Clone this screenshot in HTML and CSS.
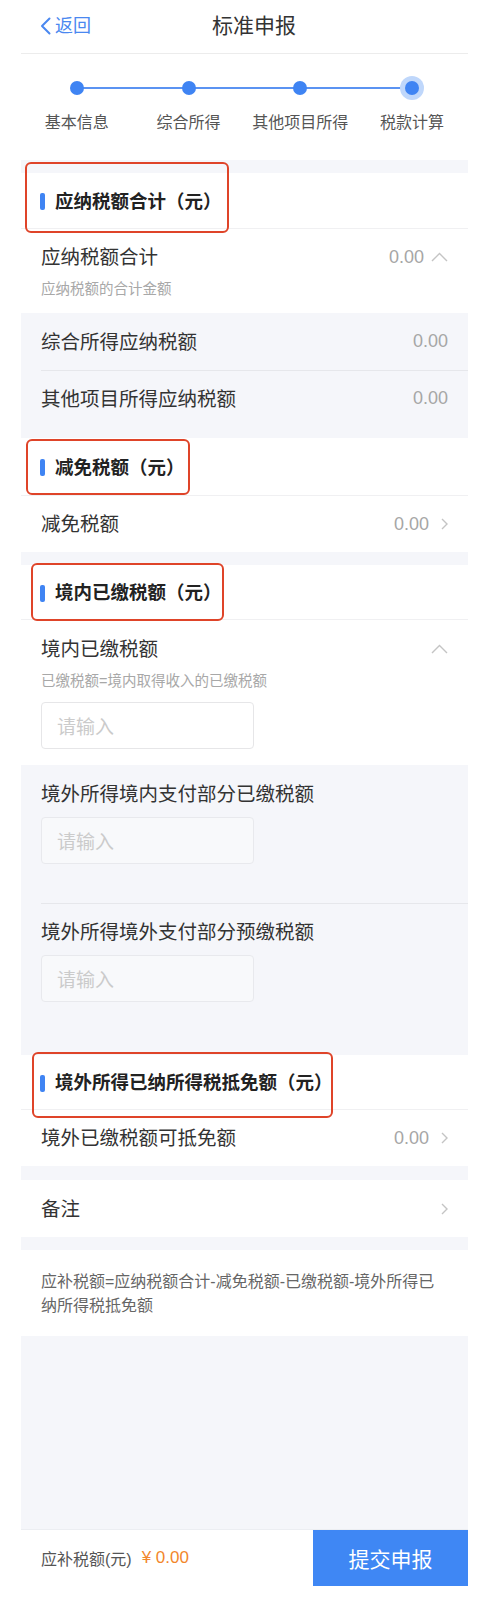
FILE: index.html
```html
<!DOCTYPE html>
<html lang="zh-CN">
<head>
<meta charset="utf-8">
<title>标准申报</title>
<link rel="stylesheet" href="styles.css">
</head>
<body>
<div class="page">
  <header class="nav">
    <a class="back">
      <svg class="back-icon" width="11" height="18" viewBox="0 0 11 18"><polyline points="9.5,1.5 2,9 9.5,16.5" fill="none" stroke="#4a88f0" stroke-width="2" stroke-linecap="round" stroke-linejoin="round"/></svg>
      <span>返回</span>
    </a>
    <h1 class="title">标准申报</h1>
    <span></span>
  </header>

  <div class="steps">
    <div class="step"><span class="dot"></span><span class="step-label">基本信息</span></div>
    <div class="step"><span class="dot"></span><span class="step-label">综合所得</span></div>
    <div class="step"><span class="dot"></span><span class="step-label">其他项目所得</span></div>
    <div class="step current"><span class="dot"></span><span class="step-label">税款计算</span></div>
  </div>

  <div class="gap"></div>

  <section class="block">
    <div class="sec-head h1"><span class="mark"></span><span class="sec-title">应纳税额合计（元）</span><span class="annot a1"></span></div>
    <div class="expand">
      <div class="expand-top">
        <span class="label">应纳税额合计</span>
        <span class="val">0.00<svg class="up" width="17" height="10" viewBox="0 0 17 10"><polyline points="1,9 8.5,1.5 16,9" fill="none" stroke="#c4c4c4" stroke-width="1.4"/></svg></span>
      </div>
      <div class="hint">应纳税额的合计金额</div>
    </div>
    <div class="subgroup">
      <div class="row sub-row"><span class="label">综合所得应纳税额</span><span class="val plain">0.00</span></div>
      <div class="row sub-row"><span class="label">其他项目所得应纳税额</span><span class="val plain">0.00</span></div>
    </div>
  </section>

  <div class="gap g-short"></div>

  <section class="block">
    <div class="sec-head h2"><span class="mark"></span><span class="sec-title">减免税额（元）</span><span class="annot a2"></span></div>
    <div class="row"><span class="label">减免税额</span><span class="val">0.00<svg class="right" width="7" height="12" viewBox="0 0 7 12"><polyline points="1,1 6,6 1,11" fill="none" stroke="#c4c4c4" stroke-width="1.4"/></svg></span></div>
  </section>

  <div class="gap"></div>

  <section class="block">
    <div class="sec-head"><span class="mark"></span><span class="sec-title">境内已缴税额（元）</span><span class="annot a3"></span></div>
    <div class="expand e2">
      <div class="expand-top">
        <span class="label">境内已缴税额</span>
        <span class="val"><svg class="up" width="17" height="10" viewBox="0 0 17 10"><polyline points="1,9 8.5,1.5 16,9" fill="none" stroke="#c4c4c4" stroke-width="1.4"/></svg></span>
      </div>
      <div class="hint">已缴税额=境内取得收入的已缴税额</div>
      <div class="input">请输入</div>
    </div>
    <div class="subgroup">
      <div class="field">
        <div class="label">境外所得境内支付部分已缴税额</div>
        <div class="input">请输入</div>
      </div>
      <div class="field">
        <div class="label">境外所得境外支付部分预缴税额</div>
        <div class="input">请输入</div>
      </div>
    </div>
  </section>

  <div class="gap g14"></div>

  <section class="block">
    <div class="sec-head"><span class="mark"></span><span class="sec-title">境外所得已纳所得税抵免额（元）</span><span class="annot a4"></span></div>
    <div class="row"><span class="label">境外已缴税额可抵免额</span><span class="val">0.00<svg class="right" width="7" height="12" viewBox="0 0 7 12"><polyline points="1,1 6,6 1,11" fill="none" stroke="#c4c4c4" stroke-width="1.4"/></svg></span></div>
  </section>

  <div class="gap g14"></div>

  <section class="block">
    <div class="row r57"><span class="label">备注</span><span class="val"><svg class="right" width="7" height="12" viewBox="0 0 7 12"><polyline points="1,1 6,6 1,11" fill="none" stroke="#c4c4c4" stroke-width="1.4"/></svg></span></div>
  </section>

  <div class="gap"></div>

  <p class="note">应补税额=应纳税额合计-减免税额-已缴税额-境外所得已纳所得税抵免额</p>

  <div class="filler"></div>

  <footer class="bar">
    <div class="due"><span class="due-label">应补税额(元)</span><span class="due-amt">¥ 0.00</span></div>
    <button class="submit">提交申报</button>
  </footer>
</div>
</body>
</html>
```

FILE: styles.css
```css
* { box-sizing: border-box; }
html, body { margin: 0; padding: 0; background: #fff; }
body {
  font-family: "Liberation Sans", "Noto Sans CJK SC", sans-serif;
  color: #333;
}
.page {
  width: 447px;
  margin-left: 21px;
  background: #fff;
}

/* nav */
.nav {
  height: 54px;
  border-bottom: 1px solid #ececec;
  display: grid;
  grid-template-columns: 1fr auto 1fr;
  align-items: center;
  padding: 0 0 1px 19px;
}
.back {
  display: flex;
  align-items: center;
  color: #4a88f0;
  font-size: 18px;
  line-height: 24px;
  gap: 4px;
}
.title {
  margin: 0;
  font-size: 21px;
  font-weight: normal;
  color: #333;
  line-height: 28px;
}

/* steps */
.steps {
  display: grid;
  grid-template-columns: repeat(4, 1fr);
  height: 106px;
  padding-top: 27px;
}
.step {
  position: relative;
  display: flex;
  flex-direction: column;
  align-items: center;
}
.step::after {
  content: "";
  position: absolute;
  left: 50%;
  width: 100%;
  top: 6px;
  height: 2px;
  background: #5b93f2;
}
.step.current::after { display: none; }
.dot {
  position: relative;
  z-index: 1;
  width: 14px;
  height: 14px;
  border-radius: 50%;
  background: #3f84f3;
}
.step.current .dot { box-shadow: 0 0 0 5px #bfd7fb; }
.step-label {
  margin-top: 18px;
  font-size: 16px;
  line-height: 20px;
  color: #555;
  white-space: nowrap;
}

/* gaps */
.gap { height: 13px; background: #f5f6fa; }
.g-short { height: 11px; }
.g14 { height: 14px; }

/* section */
.sec-head {
  position: relative;
  height: 55px;
  border-bottom: 1px solid #f0f0f2;
  display: flex;
  align-items: center;
  padding: 2px 0 0 19px;
}
.sec-head.h1 { height: 56px; }
.sec-head.h2 { height: 58px; }
.mark {
  width: 5px;
  height: 17px;
  border-radius: 2px;
  background: #3f84f3;
  margin-right: 10px;
}
.sec-title {
  font-size: 18.5px;
  font-weight: bold;
  line-height: 24px;
  color: #222;
}
.annot {
  position: absolute;
  border: 2.5px solid #df4429;
  border-radius: 6px;
  pointer-events: none;
}
.a1 { left: 4px; top: -11px; width: 204px; height: 71px; }
.a2 { left: 5px; top: 1px; width: 164px; height: 56px; }
.a3 { left: 10px; top: -2px; width: 193px; height: 58px; }
.a4 { left: 11px; top: -3px; width: 301px; height: 66px; }

.label {
  font-size: 19.5px;
  line-height: 24px;
  color: #333;
}
.val {
  display: flex;
  align-items: center;
  font-size: 18px;
  color: #a6a6a6;
}
.up { margin-left: 7px; }
.right { margin-left: 12px; }

.row {
  height: 56px;
  display: flex;
  align-items: center;
  justify-content: space-between;
  padding: 0 20px;
}
.r57 { height: 57px; }

.expand { padding: 16px 20px 14px; }
.expand-top {
  display: flex;
  align-items: center;
  justify-content: space-between;
  height: 24px;
}
.hint {
  margin-top: 10px;
  font-size: 14.5px;
  line-height: 20px;
  color: #a8a8a8;
}
.e2 { padding: 17px 20px 16px; }
.input {
  width: 213px;
  height: 47px;
  margin-top: 11px;
  border: 1px solid #e6e6e8;
  border-radius: 4px;
  padding-left: 15px;
  display: flex;
  align-items: center;
  font-size: 19px;
  color: #cbcbcb;
  background: #fff;
}

.subgroup { background: #f5f6fa; }
.sub-row { height: 57px; }
.field {
  padding: 17px 20px 39px;
}
.field .input { background: #f8f9fb; border-color: #e8e9ed; }
.sub-row + .sub-row,
.field + .field {
  background-image: linear-gradient(#e6e7eb, #e6e7eb);
  background-repeat: no-repeat;
  background-position: 20px 0;
  background-size: calc(100% - 20px) 1px;
}

.note {
  margin: 0;
  padding: 20px 28px 18px 20px;
  font-size: 16px;
  line-height: 24px;
  color: #666;
}

.filler { height: 193px; background: #f5f6fa; }

.bar {
  height: 57px;
  display: flex;
  align-items: center;
  justify-content: space-between;
  border-top: 1px solid #eceef2;
}
.due { padding-left: 20px; display: flex; align-items: center; gap: 10px; }
.due-label { font-size: 16px; color: #555; }
.due-amt { font-size: 17px; color: #f2872b; }
.submit {
  width: 155px;
  height: 56px;
  border: none;
  background: #3f87f4;
  color: #fff;
  font-family: "Noto Sans CJK SC", sans-serif;
  font-size: 21px;
  padding: 0;
}
```
